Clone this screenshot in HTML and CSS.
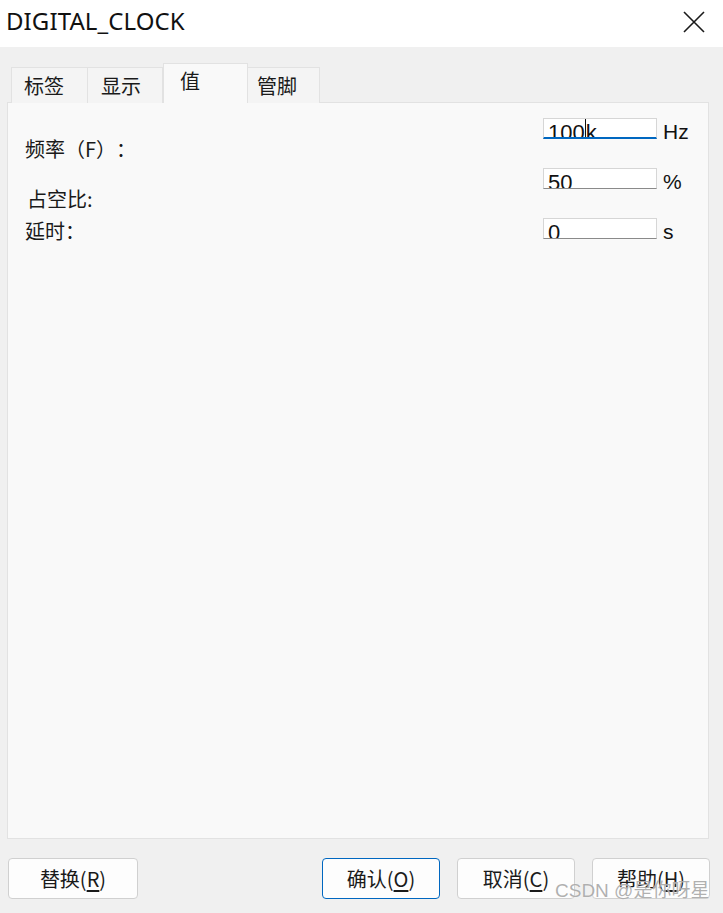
FILE: index.html
```html
<!DOCTYPE html>
<html lang="zh">
<head>
<meta charset="utf-8">
<title>DIGITAL_CLOCK</title>
<link rel="stylesheet" href="styles.css">
</head>
<body>
<div class="window">
  <header class="titlebar">
    <span class="title">DIGITAL_CLOCK</span>
    <svg class="close" width="22" height="22" viewBox="0 0 22 22" aria-label="关闭">
      <path d="M1 1 L21 21 M21 1 L1 21" stroke="#1a1a1a" stroke-width="1.6" fill="none"/>
    </svg>
  </header>
  <main class="content">
    <nav class="tabs">
      <div class="tab tab-1">标签</div>
      <div class="tab tab-2">显示</div>
      <div class="tab tab-active">值</div>
      <div class="tab tab-4">管脚</div>
    </nav>
    <section class="panel">
      <div class="labels">
        <div class="label label-freq">频率（F）：</div>
        <div class="label label-duty">占空比:</div>
        <div class="label label-delay">延时：</div>
      </div>
      <div class="fields">
        <div class="input input-focus"><span>100</span><span class="caret"></span><span>k</span></div>
        <div class="unit">Hz</div>
        <div class="input"><span>50</span></div>
        <div class="unit">%</div>
        <div class="input"><span>0</span></div>
        <div class="unit">s</div>
      </div>
    </section>
    <footer class="buttons">
      <button class="btn">替换(<u>R</u>)</button>
      <div class="btn-group">
        <button class="btn btn-default">确认(<u>O</u>)</button>
        <button class="btn">取消(<u>C</u>)</button>
        <button class="btn">帮助(<u>H</u>)</button>
      </div>
    </footer>
  </main>
  <div class="watermark">CSDN @是你呀星</div>
</div>
</body>
</html>
```
FILE: styles.css
```css
* { box-sizing: border-box; }
html, body { margin: 0; padding: 0; }
body {
  width: 723px;
  height: 913px;
  background: #f0f0f0;
  font-family: "Noto Sans CJK SC", "Liberation Sans", sans-serif;
  color: #1a1a1a;
  overflow: hidden;
  text-spacing-trim: space-all;
}
.window {
  position: relative;
  width: 723px;
  height: 913px;
}
.titlebar {
  height: 47px;
  background: #ffffff;
  display: flex;
  align-items: center;
  justify-content: space-between;
  padding: 0 18px 0 6px;
}
.title {
  font-family: "Noto Sans", "Open Sans", sans-serif;
  font-size: 24px;
  color: #111;
  letter-spacing: 0.1px;
  margin-top: -6px;
}
.close { margin-top: -4px; }
.content {
  padding: 16px 14px 0 7px;
}
.tabs {
  height: 39px;
  display: flex;
  align-items: flex-end;
  padding-left: 4px;
  position: relative;
  z-index: 2;
}
.tab {
  height: 36px;
  margin-bottom: -1px;
  background: #f4f4f4;
  border: 1px solid #e2e2e2;
  border-bottom: none;
  font-size: 20px;
  line-height: 24px;
  padding: 6px 0 0 12px;
  color: #1a1a1a;
}
.tab + .tab { border-left: none; }
.tab-1 { width: 77px; }
.tab-2 { width: 75px; padding-left: 13px; }
.tab-active {
  width: 85px;
  height: 40px;
  background: #f9f9f9;
  border-left: 1px solid #e2e2e2 !important;
  border-right: 1px solid #e2e2e2;
  padding: 5px 0 0 16px;
}
.tab-4 { width: 72px; padding-left: 9px; }
.panel {
  height: 737px;
  background: #f9f9f9;
  border: 1px solid #e2e2e2;
  display: flex;
  justify-content: space-between;
  padding: 0 6px 0 17px;
  position: relative;
  z-index: 1;
}
.labels {
  display: flex;
  flex-direction: column;
}
.label {
  font-size: 20px;
  line-height: 24px;
  color: #1a1a1a;
  white-space: nowrap;
}
.label-freq { margin-top: 34px; }
.label-duty { margin-top: 26px; padding-left: 2px; }
.label-delay { margin-top: 8px; }
.fields {
  display: grid;
  grid-template-columns: 114px 39px;
  grid-auto-rows: 21px;
  row-gap: 29px;
  column-gap: 6px;
  padding-top: 15px;
  align-content: start;
}
.input {
  height: 21px;
  background: #ffffff;
  border: 1px solid #d6d6d6;
  border-bottom-color: #8a8a8a;
  overflow: hidden;
  font-family: "Liberation Sans", Arial, sans-serif;
  font-size: 22px;
  line-height: 20px;
  padding: 4px 0 0 4px;
  white-space: nowrap;
  color: #111;
  display: flex;
  align-items: flex-start;
}
.input-focus {
  border-bottom: 2px solid #0067c0;
}
.caret {
  display: inline-block;
  width: 1px;
  height: 22px;
  margin-top: -4px;
  background: #111;
}
.unit {
  font-family: "Liberation Sans", Arial, sans-serif;
  font-size: 21px;
  line-height: 21px;
  padding-top: 3px;
  color: #111;
}
.buttons {
  display: flex;
  justify-content: space-between;
  margin-top: 19px;
  padding-left: 1px;
  margin-right: -1px;
}
.btn-group {
  display: flex;
  gap: 17px;
}
.btn {
  width: 118px;
  height: 41px;
  background: #fdfdfd;
  border: 1px solid #d0d0d0;
  border-radius: 4px;
  font-family: "Noto Sans CJK SC", "Liberation Sans", sans-serif;
  font-size: 20px;
  color: #1a1a1a;
  padding: 0;
  display: flex;
  align-items: center;
  justify-content: center;
}
.buttons > .btn { width: 130px; }
.btn u { text-underline-offset: 3px; }
.btn-default {
  border-color: #0067c0;
}
.watermark {
  position: absolute;
  left: 555px;
  top: 878px;
  font-family: "Liberation Sans", "Noto Sans CJK SC", sans-serif;
  font-size: 19px;
  line-height: 26px;
  color: rgba(150, 150, 150, 0.75);
  text-shadow: 0 0 1px rgba(255,255,255,0.9);
  white-space: nowrap;
}
```
